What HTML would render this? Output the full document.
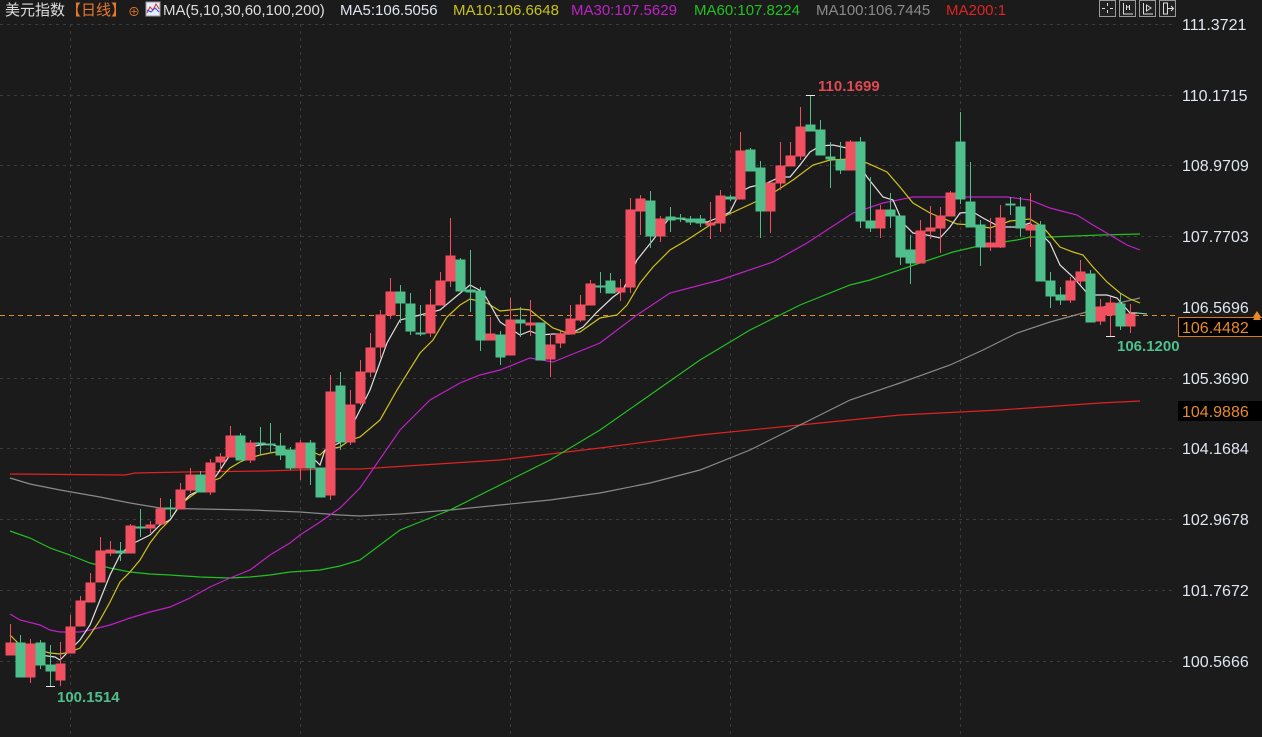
<!DOCTYPE html>
<html><head><meta charset="utf-8"><style>
html,body{margin:0;padding:0;background:#1b1b1b;width:1262px;height:737px;overflow:hidden}
svg{display:block}
text{font-family:"Liberation Sans","Noto Sans CJK SC",sans-serif}
</style></head><body>
<svg width="1262" height="737" xmlns="http://www.w3.org/2000/svg">
<rect width="1262" height="737" fill="#1b1b1b"/>
<g stroke="#3c3c3c" stroke-width="1" stroke-dasharray="3,4">
<line x1="0" y1="24.5" x2="1172" y2="24.5"/><line x1="0" y1="95.5" x2="1172" y2="95.5"/><line x1="0" y1="165.5" x2="1172" y2="165.5"/><line x1="0" y1="236.5" x2="1172" y2="236.5"/><line x1="0" y1="378.5" x2="1172" y2="378.5"/><line x1="0" y1="448.5" x2="1172" y2="448.5"/><line x1="0" y1="519.5" x2="1172" y2="519.5"/><line x1="0" y1="590.5" x2="1172" y2="590.5"/><line x1="0" y1="661.5" x2="1172" y2="661.5"/>
<line x1="70.5" y1="24" x2="70.5" y2="737"/><line x1="300.5" y1="24" x2="300.5" y2="737"/><line x1="510.5" y1="24" x2="510.5" y2="737"/><line x1="730.5" y1="24" x2="730.5" y2="737"/><line x1="960.5" y1="24" x2="960.5" y2="737"/>
</g>
<line x1="0" y1="315.5" x2="1176" y2="315.5" stroke="#e08a2a" stroke-width="1" stroke-dasharray="5,4"/>
<g fill="none" stroke-width="1.2">
<polyline stroke="#e02222" points="10,474 125,475 135,473 185,472 265,471 330,469 360,469 500,460 600,448 700,435 800,425 900,415 1000,410 1100,403 1140,401"/>
<polyline stroke="#8a8a8a" points="10,478 30,484 60,490 100,497 130,503 160,508 200,509 250,510 300,512 340,515 360,516 400,514 450,510 500,505 550,500 600,493 650,483 700,470 750,450 800,425 850,400 900,383 950,365 983,350 1017,333 1050,322 1083,313 1110,305 1140,298"/>
<polyline stroke="#22c022" points="10,531 30,538 50,548 70,555 90,563 110,568 130,572 150,574 170,575 200,577 230,578 250,577 270,575 290,572 320,570 340,566 360,560 400,530 450,510 500,485 550,460 600,430 650,395 700,360 750,330 800,305 850,285 870,280 920,263 953,252 983,245 1017,240 1030,237 1050,237 1100,235 1140,234"/>
<polyline stroke="#c020c8" points="10,614 20,620 40,625 50,630 60,632 80,632 90,630 110,625 130,618 150,612 170,607 190,598 210,587 230,578 250,570 270,555 290,543 300,535 320,522 340,508 360,488 400,430 430,400 460,383 480,375 500,370 530,358 553,362 600,343 637,315 670,293 720,280 773,262 807,243 853,213 883,203 913,197 953,197 983,197 1007,197 1030,200 1050,208 1077,215 1093,225 1110,235 1127,245 1140,250"/>
<polyline stroke="#d2c21c" points="10,635 20,645 30,648 50,653 60,654 70,652 80,648 90,635 100,620 110,602 120,582 130,572 140,560 150,543 160,530 170,520 180,505 190,497 200,490 210,482 220,478 230,468 240,462 250,458 260,455 270,453 290,450 310,451 320,455 325,450 340,447 350,440 360,437 380,420 397,390 420,353 433,340 447,317 460,305 470,299 487,303 500,311 520,309 530,310 540,318 553,328 567,333 580,332 600,318 617,315 627,305 640,283 653,267 670,250 687,240 707,227 727,215 753,203 773,193 793,180 813,165 830,160 850,159 867,163 887,172 900,187 913,203 930,213 947,220 957,224 973,225 990,228 1010,221 1030,219 1043,227 1060,247 1073,252 1083,255 1093,267 1107,282 1120,293 1130,299 1140,303"/>
<polyline stroke="#e0e0e0" points="10,647 20,655 40,655 55,657 60,660 70,650 80,640 90,625 100,600 110,575 120,555 130,545 140,540 150,535 160,525 170,520 180,505 190,495 200,490 210,485 220,470 230,455 240,450 250,447 260,445 270,444 280,447 290,452 300,452 310,455 320,465 325,450 335,445 345,440 355,420 370,390 387,343 400,320 420,315 440,310 470,285 483,292 500,322 520,335 530,331 540,335 553,334 570,334 583,327 597,312 613,297 623,290 637,260 653,240 670,217 687,220 707,222 720,217 730,212 740,192 750,187 767,183 780,177 790,177 800,165 810,152 820,146 833,145 847,148 857,160 867,177 883,197 893,200 903,223 913,233 927,235 940,238 950,227 960,213 973,212 983,218 1000,227 1017,227 1030,223 1040,233 1050,243 1060,265 1073,277 1087,293 1093,295 1107,295 1117,298 1130,313 1137,313"/>
<polyline stroke="#6fd6b0" points="1137,313 1147,314"/>
</g>
<g fill="#f0505f" stroke="#f0505f" stroke-width="1">
<line x1="10.5" y1="624" x2="10.5" y2="655"/><rect x="6" y="643" width="9" height="12"/>
<line x1="30.5" y1="639" x2="30.5" y2="683"/><rect x="26" y="644" width="9" height="33"/>
<line x1="60.5" y1="642" x2="60.5" y2="686"/><rect x="56" y="664" width="9" height="16"/>
<line x1="70.5" y1="615" x2="70.5" y2="653"/><rect x="66" y="627" width="9" height="26"/>
<line x1="80.5" y1="596" x2="80.5" y2="626"/><rect x="76" y="601" width="9" height="25"/>
<line x1="90.5" y1="573" x2="90.5" y2="602"/><rect x="86" y="583" width="9" height="19"/>
<line x1="100.5" y1="537" x2="100.5" y2="582"/><rect x="96" y="551" width="9" height="31"/>
<line x1="110.5" y1="541" x2="110.5" y2="556"/><rect x="106" y="550" width="9" height="3"/>
<line x1="130.5" y1="524" x2="130.5" y2="553"/><rect x="126" y="526" width="9" height="27"/>
<line x1="150.5" y1="521" x2="150.5" y2="533"/><rect x="146" y="525" width="9" height="3"/>
<line x1="160.5" y1="498" x2="160.5" y2="524"/><rect x="156" y="509" width="9" height="15"/>
<line x1="180.5" y1="483" x2="180.5" y2="509"/><rect x="176" y="490" width="9" height="19"/>
<line x1="190.5" y1="468" x2="190.5" y2="493"/><rect x="186" y="475" width="9" height="15"/>
<line x1="210.5" y1="459" x2="210.5" y2="495"/><rect x="206" y="463" width="9" height="29"/>
<line x1="220.5" y1="453" x2="220.5" y2="471"/><rect x="216" y="457" width="9" height="5"/>
<line x1="230.5" y1="426" x2="230.5" y2="457"/><rect x="226" y="436" width="9" height="21"/>
<line x1="250.5" y1="440" x2="250.5" y2="463"/><rect x="246" y="443" width="9" height="17"/>
<line x1="300.5" y1="440" x2="300.5" y2="480"/><rect x="296" y="443" width="9" height="25"/>
<line x1="330.5" y1="375" x2="330.5" y2="500"/><rect x="326" y="392" width="9" height="103"/>
<line x1="350.5" y1="390" x2="350.5" y2="445"/><rect x="346" y="405" width="9" height="37"/>
<line x1="360.5" y1="360" x2="360.5" y2="405"/><rect x="356" y="372" width="9" height="31"/>
<line x1="370.5" y1="333" x2="370.5" y2="377"/><rect x="366" y="348" width="9" height="24"/>
<line x1="380.5" y1="310" x2="380.5" y2="358"/><rect x="376" y="315" width="9" height="32"/>
<line x1="390.5" y1="278" x2="390.5" y2="319"/><rect x="386" y="292" width="9" height="23"/>
<line x1="430.5" y1="289" x2="430.5" y2="337"/><rect x="426" y="305" width="9" height="28"/>
<line x1="440.5" y1="272" x2="440.5" y2="305"/><rect x="436" y="281" width="9" height="24"/>
<line x1="450.5" y1="218" x2="450.5" y2="287"/><rect x="446" y="256" width="9" height="25"/>
<line x1="490.5" y1="317" x2="490.5" y2="340"/><rect x="486" y="334" width="9" height="6"/>
<line x1="510.5" y1="298" x2="510.5" y2="355"/><rect x="506" y="320" width="9" height="35"/>
<line x1="530.5" y1="300" x2="530.5" y2="336"/><rect x="526" y="323" width="9" height="2"/>
<line x1="550.5" y1="334" x2="550.5" y2="377"/><rect x="546" y="345" width="9" height="14"/>
<line x1="560.5" y1="331" x2="560.5" y2="348"/><rect x="556" y="334" width="9" height="9"/>
<line x1="570.5" y1="305" x2="570.5" y2="334"/><rect x="566" y="319" width="9" height="15"/>
<line x1="580.5" y1="295" x2="580.5" y2="322"/><rect x="576" y="305" width="9" height="15"/>
<line x1="590.5" y1="280" x2="590.5" y2="305"/><rect x="586" y="284" width="9" height="21"/>
<line x1="620.5" y1="279" x2="620.5" y2="301"/><rect x="616" y="288" width="9" height="4"/>
<line x1="630.5" y1="198" x2="630.5" y2="293"/><rect x="626" y="210" width="9" height="77"/>
<line x1="640.5" y1="195" x2="640.5" y2="235"/><rect x="636" y="199" width="9" height="12"/>
<line x1="660.5" y1="216" x2="660.5" y2="242"/><rect x="656" y="219" width="9" height="17"/>
<line x1="710.5" y1="202" x2="710.5" y2="239"/><rect x="706" y="223" width="9" height="2"/>
<line x1="720.5" y1="190" x2="720.5" y2="232"/><rect x="716" y="196" width="9" height="27"/>
<line x1="740.5" y1="132" x2="740.5" y2="199"/><rect x="736" y="151" width="9" height="48"/>
<line x1="770.5" y1="183" x2="770.5" y2="233"/><rect x="766" y="183" width="9" height="28"/>
<line x1="780.5" y1="142" x2="780.5" y2="190"/><rect x="776" y="166" width="9" height="17"/>
<line x1="790.5" y1="142" x2="790.5" y2="166"/><rect x="786" y="156" width="9" height="10"/>
<line x1="800.5" y1="107" x2="800.5" y2="160"/><rect x="796" y="127" width="9" height="29"/>
<line x1="850.5" y1="140" x2="850.5" y2="170"/><rect x="846" y="142" width="9" height="28"/>
<line x1="880.5" y1="205" x2="880.5" y2="238"/><rect x="876" y="210" width="9" height="18"/>
<line x1="920.5" y1="220" x2="920.5" y2="263"/><rect x="916" y="231" width="9" height="32"/>
<line x1="930.5" y1="206" x2="930.5" y2="239"/><rect x="926" y="228" width="9" height="3"/>
<line x1="940.5" y1="207" x2="940.5" y2="253"/><rect x="936" y="216" width="9" height="12"/>
<line x1="950.5" y1="191" x2="950.5" y2="216"/><rect x="946" y="193" width="9" height="23"/>
<line x1="990.5" y1="218" x2="990.5" y2="251"/><rect x="986" y="243" width="9" height="4"/>
<line x1="1000.5" y1="205" x2="1000.5" y2="248"/><rect x="996" y="218" width="9" height="29"/>
<line x1="1030.5" y1="193" x2="1030.5" y2="247"/><rect x="1026" y="225" width="9" height="5"/>
<line x1="1070.5" y1="277" x2="1070.5" y2="303"/><rect x="1066" y="281" width="9" height="19"/>
<line x1="1080.5" y1="260" x2="1080.5" y2="285"/><rect x="1076" y="272" width="9" height="9"/>
<line x1="1100.5" y1="299" x2="1100.5" y2="325"/><rect x="1096" y="307" width="9" height="14"/>
<line x1="1110.5" y1="297" x2="1110.5" y2="336"/><rect x="1106" y="303" width="9" height="12"/>
<line x1="1130.5" y1="304" x2="1130.5" y2="333"/><rect x="1126" y="314" width="9" height="12"/>
</g>
<g fill="#4fbf8c" stroke="#4fbf8c" stroke-width="1">
<line x1="20.5" y1="635" x2="20.5" y2="677"/><rect x="16" y="643" width="9" height="34"/>
<line x1="40.5" y1="640" x2="40.5" y2="669"/><rect x="36" y="643" width="9" height="22"/>
<line x1="50.5" y1="645" x2="50.5" y2="686"/><rect x="46" y="665" width="9" height="6"/>
<line x1="120.5" y1="542" x2="120.5" y2="561"/><rect x="116" y="551" width="9" height="2"/>
<line x1="140.5" y1="509" x2="140.5" y2="537"/><rect x="136" y="527" width="9" height="1"/>
<line x1="170.5" y1="499" x2="170.5" y2="517"/><rect x="166" y="508" width="9" height="1"/>
<line x1="200.5" y1="471" x2="200.5" y2="492"/><rect x="196" y="475" width="9" height="17"/>
<line x1="240.5" y1="433" x2="240.5" y2="460"/><rect x="236" y="436" width="9" height="24"/>
<line x1="260.5" y1="427" x2="260.5" y2="455"/><rect x="256" y="443" width="9" height="1"/>
<line x1="270.5" y1="423" x2="270.5" y2="453"/><rect x="266" y="444" width="9" height="1"/>
<line x1="280.5" y1="433" x2="280.5" y2="460"/><rect x="276" y="446" width="9" height="9"/>
<line x1="290.5" y1="447" x2="290.5" y2="470"/><rect x="286" y="450" width="9" height="18"/>
<line x1="310.5" y1="440" x2="310.5" y2="485"/><rect x="306" y="443" width="9" height="25"/>
<line x1="320.5" y1="468" x2="320.5" y2="497"/><rect x="316" y="468" width="9" height="29"/>
<line x1="340.5" y1="372" x2="340.5" y2="450"/><rect x="336" y="386" width="9" height="56"/>
<line x1="400.5" y1="285" x2="400.5" y2="323"/><rect x="396" y="292" width="9" height="11"/>
<line x1="410.5" y1="293" x2="410.5" y2="335"/><rect x="406" y="304" width="9" height="27"/>
<line x1="420.5" y1="305" x2="420.5" y2="336"/><rect x="416" y="333" width="9" height="1"/>
<line x1="460.5" y1="258" x2="460.5" y2="291"/><rect x="456" y="260" width="9" height="31"/>
<line x1="470.5" y1="250" x2="470.5" y2="312"/><rect x="466" y="290" width="9" height="2"/>
<line x1="480.5" y1="287" x2="480.5" y2="351"/><rect x="476" y="291" width="9" height="49"/>
<line x1="500.5" y1="331" x2="500.5" y2="365"/><rect x="496" y="335" width="9" height="22"/>
<line x1="520.5" y1="307" x2="520.5" y2="337"/><rect x="516" y="320" width="9" height="3"/>
<line x1="540.5" y1="323" x2="540.5" y2="360"/><rect x="536" y="323" width="9" height="37"/>
<line x1="600.5" y1="272" x2="600.5" y2="293"/><rect x="596" y="286" width="9" height="1"/>
<line x1="610.5" y1="273" x2="610.5" y2="293"/><rect x="606" y="281" width="9" height="12"/>
<line x1="650.5" y1="191" x2="650.5" y2="248"/><rect x="646" y="201" width="9" height="35"/>
<line x1="670.5" y1="207" x2="670.5" y2="232"/><rect x="666" y="217" width="9" height="3"/>
<line x1="680.5" y1="214" x2="680.5" y2="222"/><rect x="676" y="218" width="9" height="1"/>
<line x1="690.5" y1="216" x2="690.5" y2="225"/><rect x="686" y="219" width="9" height="3"/>
<line x1="700.5" y1="215" x2="700.5" y2="227"/><rect x="696" y="219" width="9" height="4"/>
<line x1="730.5" y1="195" x2="730.5" y2="201"/><rect x="726" y="197" width="9" height="2"/>
<line x1="750.5" y1="148" x2="750.5" y2="171"/><rect x="746" y="150" width="9" height="21"/>
<line x1="760.5" y1="161" x2="760.5" y2="238"/><rect x="756" y="168" width="9" height="43"/>
<line x1="810.5" y1="95" x2="810.5" y2="131"/><rect x="806" y="125" width="9" height="6"/>
<line x1="820.5" y1="120" x2="820.5" y2="155"/><rect x="816" y="130" width="9" height="25"/>
<line x1="830.5" y1="142" x2="830.5" y2="188"/><rect x="826" y="157" width="9" height="2"/>
<line x1="840.5" y1="142" x2="840.5" y2="174"/><rect x="836" y="160" width="9" height="10"/>
<line x1="860.5" y1="137" x2="860.5" y2="228"/><rect x="856" y="142" width="9" height="79"/>
<line x1="870.5" y1="177" x2="870.5" y2="232"/><rect x="866" y="221" width="9" height="7"/>
<line x1="890.5" y1="193" x2="890.5" y2="228"/><rect x="886" y="210" width="9" height="6"/>
<line x1="900.5" y1="216" x2="900.5" y2="265"/><rect x="896" y="216" width="9" height="41"/>
<line x1="910.5" y1="235" x2="910.5" y2="284"/><rect x="906" y="250" width="9" height="13"/>
<line x1="960.5" y1="112" x2="960.5" y2="204"/><rect x="956" y="142" width="9" height="57"/>
<line x1="970.5" y1="162" x2="970.5" y2="227"/><rect x="966" y="202" width="9" height="25"/>
<line x1="980.5" y1="220" x2="980.5" y2="266"/><rect x="976" y="225" width="9" height="22"/>
<line x1="1010.5" y1="197" x2="1010.5" y2="215"/><rect x="1006" y="204" width="9" height="1"/>
<line x1="1020.5" y1="197" x2="1020.5" y2="237"/><rect x="1016" y="207" width="9" height="21"/>
<line x1="1040.5" y1="221" x2="1040.5" y2="281"/><rect x="1036" y="225" width="9" height="56"/>
<line x1="1050.5" y1="272" x2="1050.5" y2="308"/><rect x="1046" y="281" width="9" height="15"/>
<line x1="1060.5" y1="287" x2="1060.5" y2="305"/><rect x="1056" y="295" width="9" height="5"/>
<line x1="1090.5" y1="270" x2="1090.5" y2="322"/><rect x="1086" y="274" width="9" height="48"/>
<line x1="1120.5" y1="294" x2="1120.5" y2="330"/><rect x="1116" y="304" width="9" height="22"/>
</g>
<g stroke="#e8e8e8" stroke-width="1">
<line x1="806" y1="95.5" x2="815" y2="95.5"/><line x1="46" y1="686.5" x2="55" y2="686.5"/><line x1="1106" y1="336.5" x2="1115" y2="336.5"/>
</g>
<text x="818" y="91" fill="#e04a55" font-size="15" font-weight="bold">110.1699</text>
<text x="57" y="702" fill="#4fbf8c" font-size="15" font-weight="bold">100.1514</text>
<text x="1117" y="351" fill="#4fbf8c" font-size="15" font-weight="bold">106.1200</text>
<g fill="#dfe6f0" font-size="16">
<text x="1182" y="30">111.3721</text>
<text x="1182" y="101">110.1715</text>
<text x="1182" y="171">108.9709</text>
<text x="1182" y="242">107.7703</text>
<text x="1182" y="313">106.5696</text>
<text x="1182" y="384">105.3690</text>
<text x="1182" y="454">104.1684</text>
<text x="1182" y="525">102.9678</text>
<text x="1182" y="596">101.7672</text>
<text x="1182" y="667">100.5666</text>
</g>
<rect x="1178.5" y="317.5" width="84" height="19" fill="#000" stroke="#d77a1e"/>
<text x="1182" y="333" fill="#e8892a" font-size="16">106.4482</text>
<rect x="1178" y="401" width="84" height="20" fill="#000"/>
<text x="1182" y="417" fill="#e8892a" font-size="16">104.9886</text>
<path d="M1253,317 L1257,311 L1261,317 Z M1253,320 L1257,314 L1261,320" fill="#e8892a"/>
<g stroke="#9a9a9a" fill="#222" stroke-width="1">
<rect x="1099.5" y="0.5" width="16" height="16"/><rect x="1119.5" y="0.5" width="16" height="16"/><rect x="1139.5" y="0.5" width="16" height="16"/><rect x="1159.5" y="0.5" width="16" height="16"/>
</g>
<g stroke="#ddd" stroke-width="1" fill="none">
<path d="M1107.5,3 V6 M1107.5,10 V13 M1102,8.5 H1105 M1110,8.5 H1113"/>
<path d="M1123.5,3 V14 H1133 M1126.5,5 V10 M1126.5,7 H1129 M1129.5,5 V10"/>
<path d="M1143.5,3 V14 H1153 M1146.5,5 L1151,8 L1146.5,11 Z"/>
<path d="M1163.5,3 H1167.5 V14 H1163.5 Z M1168,8.5 H1173 M1171,6 L1173.5,8.5 L1171,11"/>
</g>
<g font-size="15">
<text x="5" y="15" fill="#dddddd">美元指数</text>
<text x="66" y="15" fill="#e8792a">【日线】</text>
<text x="128" y="16" fill="#e8792a" font-size="12">⊕</text>
<rect x="146" y="2" width="14" height="14" fill="#e8eef8" stroke="#99a" stroke-width="1"/>
<path d="M147,13 L150,7 L153,10 L156,4 L159,9" stroke="#e03030" fill="none" stroke-width="1"/>
<path d="M147,10 L151,12 L155,8 L159,12" stroke="#3050e0" fill="none" stroke-width="1"/>
<text x="163" y="15" fill="#dddddd">MA(5,10,30,60,100,200)</text>
<text x="340" y="15" fill="#dfe6f0">MA5:106.5056</text>
<text x="453" y="15" fill="#c8c21c">MA10:106.6648</text>
<text x="571" y="15" fill="#c020c8">MA30:107.5629</text>
<text x="694" y="15" fill="#22c022">MA60:107.8224</text>
<text x="816" y="15" fill="#8a8a8a">MA100:106.7445</text>
<text x="946" y="15" fill="#e02222">MA200:1</text>
</g>
</svg>
</body></html>
